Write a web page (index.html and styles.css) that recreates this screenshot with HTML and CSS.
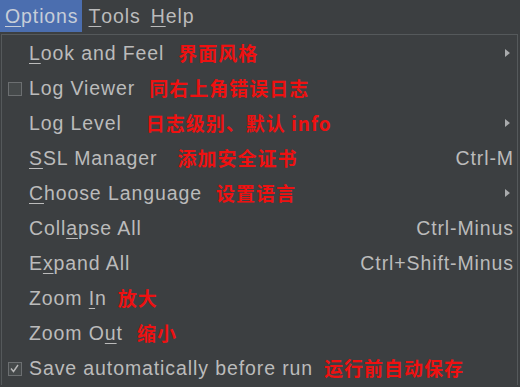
FILE: index.html
```html
<!DOCTYPE html>
<html>
<head>
<meta charset="utf-8">
<link rel="stylesheet" href="styles.css">
</head>
<body>
<div class="menubar">
  <span class="top active"><u>O</u>ptions</span>
  <span class="top"><u>T</u>ools</span>
  <span class="top"><u>H</u>elp</span>
</div>
<div class="popup">
  <div class="row">
    <span class="gutter"></span>
    <span class="label"><u>L</u>ook and Feel</span>
    <span class="note">界面风格</span>
    <span class="spacer"></span>
    <span class="arrow"></span>
  </div>
  <div class="row">
    <span class="gutter"><span class="box"></span></span>
    <span class="label">Log Viewer</span>
    <span class="note">同右上角错误日志</span>
    <span class="spacer"></span>
  </div>
  <div class="row">
    <span class="gutter"></span>
    <span class="label">Log Level</span>
    <span class="note far">日志级别、默认 info</span>
    <span class="spacer"></span>
    <span class="arrow"></span>
  </div>
  <div class="row">
    <span class="gutter"></span>
    <span class="label"><u>S</u>SL Manager</span>
    <span class="note wide">添加安全证书</span>
    <span class="spacer"></span>
    <span class="key">Ctrl-M</span>
  </div>
  <div class="row">
    <span class="gutter"></span>
    <span class="label"><u>C</u>hoose Language</span>
    <span class="note">设置语言</span>
    <span class="spacer"></span>
    <span class="arrow"></span>
  </div>
  <div class="row">
    <span class="gutter"></span>
    <span class="label">Coll<u>a</u>pse All</span>
    <span class="spacer"></span>
    <span class="key">Ctrl-Minus</span>
  </div>
  <div class="row">
    <span class="gutter"></span>
    <span class="label">E<u>x</u>pand All</span>
    <span class="spacer"></span>
    <span class="key">Ctrl+Shift-Minus</span>
  </div>
  <div class="row">
    <span class="gutter"></span>
    <span class="label">Zoom <u>I</u>n</span>
    <span class="note near">放大</span>
    <span class="spacer"></span>
  </div>
  <div class="row">
    <span class="gutter"></span>
    <span class="label">Zoom O<u>u</u>t</span>
    <span class="note">缩小</span>
    <span class="spacer"></span>
  </div>
  <div class="row">
    <span class="gutter"><span class="box checked"><svg viewBox="0 0 13 13" width="13" height="13"><path d="M3 6.5 L5.5 9.5 L10 3" fill="none" stroke="#b8b8b8" stroke-width="1.4"/></svg></span></span>
    <span class="label">Save automatically before run</span>
    <span class="note near">运行前自动保存</span>
    <span class="spacer"></span>
  </div>
</div>
</body>
</html>
```

FILE: styles.css
```css
html, body {
  margin: 0;
  padding: 0;
  background: #3c3f41;
}
body {
  width: 520px;
  height: 387px;
  overflow: hidden;
  font-family: "Liberation Sans", Arial, sans-serif;
  color: #bbbbbb;
  font-size: 19.5px;
  letter-spacing: 0.9px;
}
u {
  text-decoration: underline;
  text-decoration-thickness: 1px;
  text-underline-offset: 3px;
}
.menubar {
  display: flex;
  height: 34px;
  align-items: stretch;
  background: #3c3f41;
}
.top {
  display: flex;
  align-items: center;
  padding: 0 3px 2px 5px;
  margin-right: 2px;
}
.top.active {
  background: #4b6eaf;
  color: #c6cdd8;
  margin-bottom: 2px;
  padding-bottom: 0;
}
.popup {
  margin-left: 1px;
  width: 515px;
  border: 1px solid #55595b;
  border-bottom: none;
  background: #3c3f41;
}
.row {
  display: flex;
  align-items: center;
  height: 35px;
  padding-top: 2px;
  box-sizing: border-box;
}
.gutter {
  width: 27px;
  flex: none;
  display: flex;
  align-items: center;
}
.box {
  display: block;
  width: 12px;
  height: 12px;
  margin-left: 6px;
  border: 1px solid #6c6f71;
  background: #45494a;
  box-sizing: content-box;
}
.box svg {
  display: block;
  margin: -1px 0 0 -1px;
}
.label {
  white-space: nowrap;
}
.note {
  margin-left: 14px;
  color: #ee1111;
  font-family: "Noto Sans CJK SC", "Liberation Sans", sans-serif;
  font-weight: 700;
  font-size: 19px;
  letter-spacing: 1px;
  white-space: nowrap;
  margin-top: -2px;
}
.note.far {
  margin-left: 24px;
}
.note.wide {
  margin-left: 20px;
}
.note.near {
  margin-left: 11px;
}
.spacer {
  flex: 1;
}
.key {
  margin-right: 3px;
  white-space: nowrap;
}
.arrow {
  width: 0;
  height: 0;
  border-top: 4px solid transparent;
  border-bottom: 4px solid transparent;
  border-left: 5px solid #a9abad;
  margin-right: 7px;
  margin-top: -2px;
}
```
